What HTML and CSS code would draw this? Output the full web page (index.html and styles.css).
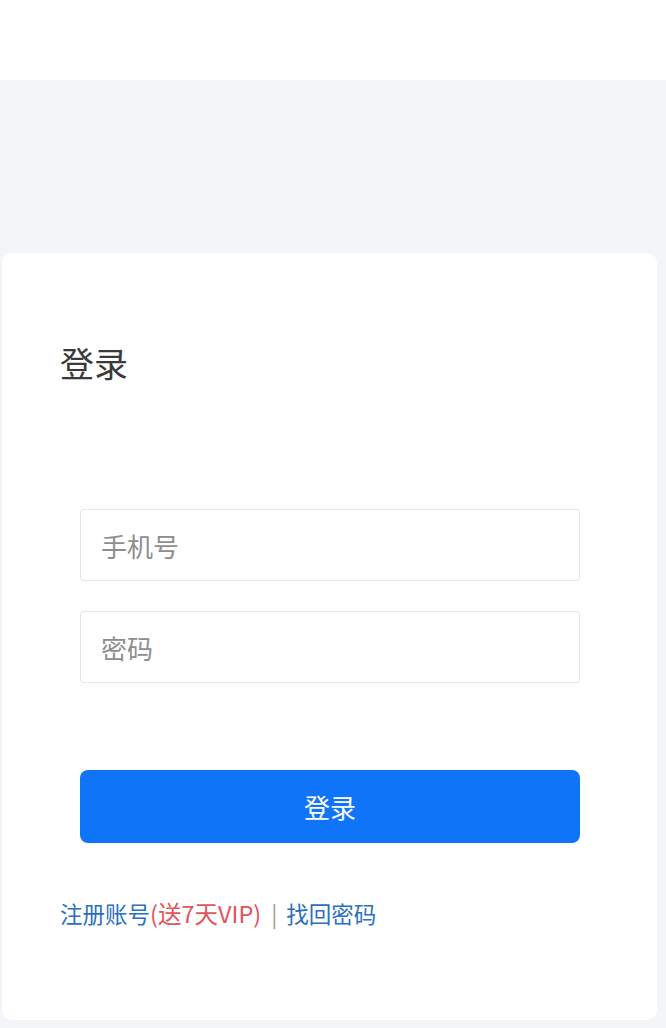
FILE: index.html
```html
<!DOCTYPE html>
<html lang="zh-CN">
<head>
<meta charset="utf-8">
<title>登录</title>
<link rel="stylesheet" href="styles.css">
</head>
<body>
<header class="topbar"></header>
<main class="page">
  <section class="card">
    <h1 class="title">登录</h1>
    <form class="form">
      <input class="field" type="text" placeholder="手机号">
      <input class="field" type="password" placeholder="密码">
      <button class="submit" type="button">登录</button>
    </form>
    <div class="links">
      <a class="link">注册账号</a><span class="promo">(送7天VIP)</span><span class="sep">|</span><a class="link">找回密码</a>
    </div>
  </section>
</main>
</body>
</html>
```
FILE: styles.css
```css
* { box-sizing: border-box; }
html, body { margin: 0; padding: 0; }
body {
  width: 666px;
  height: 1028px;
  overflow: hidden;
  background: #f3f5f9;
  font-family: "Noto Sans CJK SC", "Noto Sans", sans-serif;
}
.topbar {
  height: 80px;
  background: #ffffff;
}
.page {
  padding: 173px 9px 0 2px;
}
.card {
  height: 767px;
  background: #ffffff;
  border-radius: 10px;
  padding: 88px 0 0 58px;
}
.title {
  margin: 0;
  font-size: 34px;
  font-weight: 400;
  line-height: 44px;
  color: #3a3a3a;
}
.form {
  display: flex;
  flex-direction: column;
  margin: 124px 0 0 20px;
  width: 500px;
}
.field {
  height: 72px;
  border: 1px solid #e6e6e6;
  border-radius: 3px;
  padding: 0 20px;
  font-family: inherit;
  font-size: 26px;
  color: #333;
  outline: none;
  background: #fff;
}
.field + .field { margin-top: 30px; }
.field::placeholder { color: #8e8e8e; }
.submit {
  margin-top: 87px;
  height: 73px;
  border: none;
  border-radius: 8px;
  background: #0f74f7;
  color: #ffffff;
  font-family: inherit;
  font-size: 26px;
}
.links {
  margin-top: 54px;
  font-size: 22.5px;
  line-height: 32px;
  display: flex;
  align-items: center;
}
.link { color: #2a70bd; }
.promo { color: #e2555b; font-size: 23.5px; }
.sep { color: #999; margin: 0 9px 0 10px; }
```
